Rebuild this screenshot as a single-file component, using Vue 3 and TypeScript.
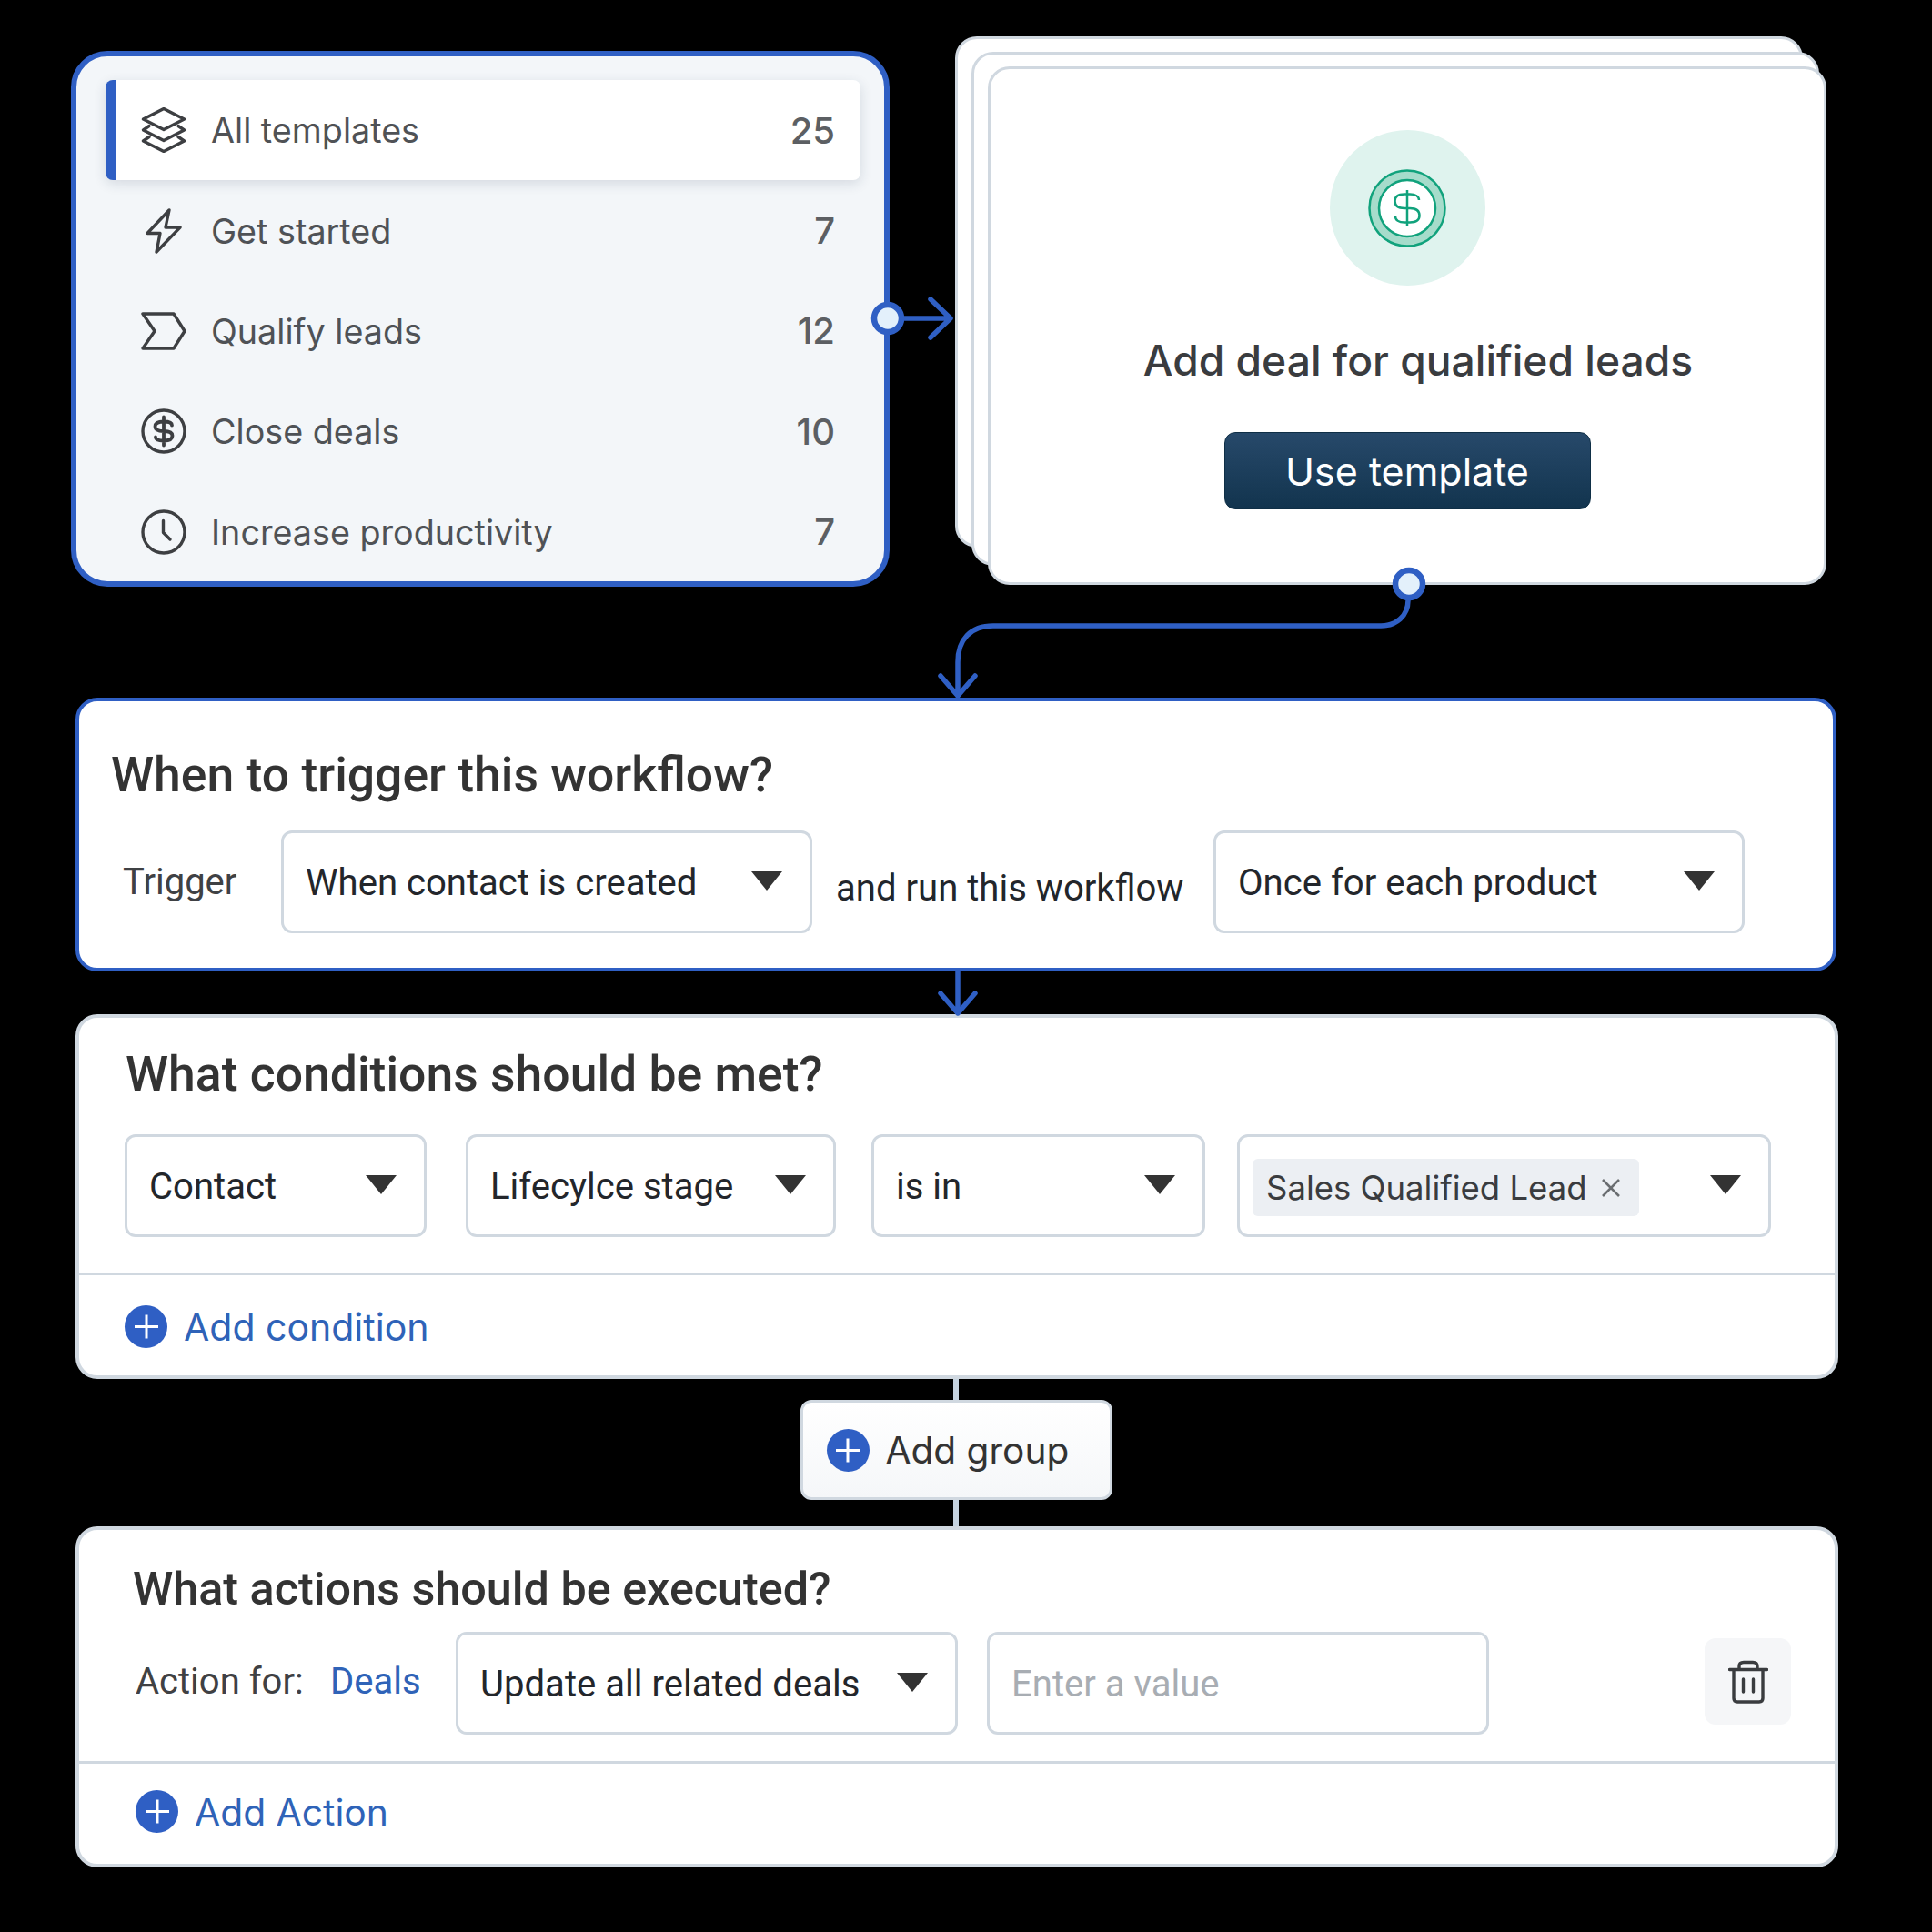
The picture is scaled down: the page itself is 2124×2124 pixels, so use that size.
<template>
  <div class="canvas">
    <div class="top-row">
      <div class="panel">
        <div
          v-for="(item, i) in categories"
          :key="item.label"
          class="cat-row"
          :class="{ active: i === 0 }"
        >
          <svg class="cat-icon" viewBox="0 0 50 50" fill="none" stroke="#3d3f42" stroke-width="3.4" stroke-linejoin="round" stroke-linecap="round">
            <template v-if="item.icon === 'layers'">
              <path d="M25 1.5 47.5 13 25 24.5 2.5 13Z" />
              <path d="M9 20.5 2.5 25 25 36.5 47.5 25 41 20.5" />
              <path d="M9 32.5 2.5 37 25 48.5 47.5 37 41 32.5" />
            </template>
            <path v-else-if="item.icon === 'bolt'" d="M31 2 7 27.5H21L17 48 43 21H27Z" />
            <path v-else-if="item.icon === 'tag'" d="M2 6H36L48 25 36 44H2L15 25Z" />
            <template v-else-if="item.icon === 'dollar'">
              <circle cx="25" cy="25" r="23" />
              <path d="M34 18.5C34 15.5 31 14.5 25 14.5 18.5 14.5 15.5 16.5 15.5 20 15.5 23.5 19 25 25 25 31 25 34.5 26.5 34.5 30 34.5 33.5 31.5 35.5 25 35.5 19 35.5 16 34.5 16 31.5M25 9.5V40.5" stroke-width="3.8" />
            </template>
            <template v-else>
              <circle cx="25" cy="25" r="23" />
              <path d="M24.5 12.5V25.5L32 33" />
            </template>
          </svg>
          <span class="cat-label">{{ item.label }}</span>
          <span class="cat-count">{{ item.count }}</span>
        </div>
      </div>

      <div class="stack">
        <div class="back back-1"></div>
        <div class="back back-2"></div>
        <div class="template-card">
          <div class="coin">
            <svg width="86" height="86" viewBox="0 0 86 86" fill="none">
              <circle cx="43" cy="43" r="36" fill="#fff" stroke="#a6dccb" stroke-width="12" />
              <circle cx="43" cy="43" r="41.5" stroke="#11a27c" stroke-width="2.5" />
              <circle cx="43" cy="43" r="31" stroke="#11a27c" stroke-width="2.5" />
              <path d="M56 34C56 30 52 27.5 46 27.5H40C33 27.5 29.5 30.5 29.5 35 29.5 40 33 43 40 43H46C53 43 56.5 46 56.5 51 56.5 55.5 53 58.5 46 58.5H40C34 58.5 30 56 30 52M43 23V63" stroke="#11a27c" stroke-width="2.5" />
            </svg>
          </div>
          <div class="template-title">Add deal for qualified leads</div>
          <button class="use-btn">Use template</button>
        </div>
      </div>
    </div>

    <section class="box trigger-box">
      <h2 class="trigger-title">When to trigger this workflow?</h2>
      <div class="trigger-row">
        <span class="lbl">Trigger</span>
        <div class="select w584"><span>When contact is created</span><i class="caret"></i></div>
        <span class="and-run">and run this workflow</span>
        <div class="select w584"><span>Once for each product</span><i class="caret"></i></div>
      </div>
    </section>

    <section class="box cond-box">
      <h2 class="cond-title">What conditions should be met?</h2>
      <div class="cond-row">
        <div class="select w332"><span>Contact</span><i class="caret"></i></div>
        <div class="select w407"><span>Lifecylce stage</span><i class="caret"></i></div>
        <div class="select w367"><span>is in</span><i class="caret"></i></div>
        <div class="select w587 tags">
          <span class="chip">Sales Qualified Lead
            <svg width="22" height="22" viewBox="0 0 22 22" stroke="#6a6d70" stroke-width="2.6"><path d="M2 2 20 20M20 2 2 20" /></svg>
          </span>
          <i class="caret"></i>
        </div>
      </div>
      <div class="add-line">
        <span class="plus"></span>
        <span>Add condition</span>
      </div>
    </section>

    <div class="group-wrap">
      <div class="link l1"></div>
      <button class="add-group"><span class="plus"></span>Add group</button>
      <div class="link l2"></div>
    </div>

    <section class="box action-box">
      <h2 class="action-title">What actions should be executed?</h2>
      <div class="action-row">
        <span class="action-for">Action for:</span>
        <span class="deals">Deals</span>
        <div class="select w552"><span>Update all related deals</span><i class="caret"></i></div>
        <div class="select w552 value"><span>Enter a value</span></div>
        <div class="trash">
          <svg width="44" height="48" viewBox="0 0 44 48" fill="none" stroke="#3a3c3f" stroke-width="3.4" stroke-linecap="round" stroke-linejoin="round">
            <path d="M1.5 10.5H42.5" />
            <path d="M6 11V42C6 44.5 7.5 46 10 46H34C36.5 46 38 44.5 38 42V11" />
            <path d="M12 10V7C12 4 14 2.5 17 2.5H27C30 2.5 32 4 32 7V10" />
            <path d="M16.5 21V35M27.5 21V35" />
          </svg>
        </div>
      </div>
      <div class="add-line action-add">
        <span class="plus"></span>
        <span>Add Action</span>
      </div>
    </section>

    <!-- connectors drawn over the cards -->
    <svg class="wires" width="2124" height="2124" viewBox="0 0 2124 2124" fill="none" stroke="#2f5fc4" stroke-width="5.5" stroke-linecap="round" stroke-linejoin="round">
      <path d="M990 350H1044M1023 329 1045 350 1023 371" />
      <path d="M1548 655V660C1548 677 1535 688 1518 688H1092C1067 688 1053 703 1053 728V765M1034 743 1053 765 1072 743" />
      <path d="M1053 1068V1114M1034 1092 1053 1114 1072 1092" />
      <circle cx="976" cy="350" r="15" fill="#e3f0fb" stroke-width="6.5" />
      <circle cx="1549" cy="642" r="15" fill="#e3f0fb" stroke-width="6.5" />
    </svg>
  </div>
</template>

<script setup lang="ts">
interface Category {
  label: string
  count: number
  icon: 'layers' | 'bolt' | 'tag' | 'dollar' | 'clock'
}

const categories: Category[] = [
  { label: 'All templates', count: 25, icon: 'layers' },
  { label: 'Get started', count: 7, icon: 'bolt' },
  { label: 'Qualify leads', count: 12, icon: 'tag' },
  { label: 'Close deals', count: 10, icon: 'dollar' },
  { label: 'Increase productivity', count: 7, icon: 'clock' },
]
</script>

<style>
html,
body {
  margin: 0;
  background: #000;
}
</style>

<style scoped>
.canvas {
  position: relative;
  width: 2124px;
  height: 2124px;
  box-sizing: border-box;
  padding: 40px 0 0 78px;
  background: #000;
  font-family: Inter, "Liberation Sans", sans-serif;
  color: #333;
}

.top-row {
  display: flex;
  align-items: flex-start;
  height: 605px;
}

.panel {
  width: 900px;
  height: 589px;
  margin-top: 16px;
  box-sizing: border-box;
  padding: 26px 26px 0 32px;
  background: #f3f6f9;
  border: 6px solid #2f5fc4;
  border-radius: 40px;
  overflow: hidden;
}

.cat-row {
  display: flex;
  align-items: center;
  height: 110.4px;
  box-sizing: border-box;
  padding: 0 28px 0 28px;
  border-left: 11px solid transparent;
  border-radius: 8px;
}

.cat-row.active {
  background: #fff;
  border-left-color: #2f5fc4;
  box-shadow: 0 4px 14px rgba(30, 50, 80, 0.14);
}

.cat-icon {
  width: 50px;
  height: 50px;
  flex: none;
}

.cat-label {
  margin-left: 27px;
  font-size: 37.7px;
  color: #4f5256;
}

.cat-count {
  margin-left: auto;
  font-size: 40px;
  font-weight: 500;
  color: #5c5f63;
}

.stack {
  position: relative;
  width: 958px;
  margin-left: 72px;
}

.back,
.template-card {
  box-sizing: border-box;
  background: #fff;
  border: 3px solid #d0d8e0;
  border-radius: 24px;
}

.back {
  position: absolute;
}

.back-1 {
  left: 0;
  top: 0;
  width: 932px;
  height: 562px;
}

.back-2 {
  left: 18px;
  top: 17px;
  width: 932px;
  height: 565px;
}

.template-card {
  position: relative;
  display: flex;
  flex-direction: column;
  align-items: center;
  width: 922px;
  height: 570px;
  margin: 33px 0 0 36px;
  padding-top: 67px;
}

.coin {
  display: flex;
  align-items: center;
  justify-content: center;
  width: 171px;
  height: 171px;
  background: #dff3ee;
  border-radius: 50%;
}

.template-title {
  margin: 54px 0 0 24px;
  font-size: 46.2px;
  line-height: 56px;
  font-weight: 500;
  color: #3a3c3f;
}

.use-btn {
  width: 403px;
  height: 85px;
  margin-top: 51px;
  border: 1px solid #0f2f46;
  border-radius: 12px;
  background: linear-gradient(#27496a, #12344e);
  color: #fff;
  font-family: inherit;
  font-size: 43px;
}

.box {
  box-sizing: border-box;
  background: #fff;
  border: 4px solid #d0d8e0;
  border-radius: 24px;
  font-family: Roboto, "Liberation Sans", sans-serif;
}

h2 {
  margin: 0;
  font-family: Roboto, sans-serif;
  font-size: 53.5px;
  font-weight: 500;
  color: #333;
}

.trigger-box {
  width: 1936px;
  height: 301px;
  margin: 122px 0 0 5px;
  padding: 50px 0 0 35px;
  border-color: #2f5fc4;
}

.trigger-title {
  line-height: 61px;
}

.trigger-row {
  display: flex;
  align-items: flex-start;
  margin-top: 31px;
  padding-left: 13px;
}

.lbl {
  width: 174px;
  font-size: 40px;
  line-height: 114px;
  color: #3f4144;
}

.select {
  display: flex;
  align-items: center;
  justify-content: space-between;
  box-sizing: border-box;
  height: 113px;
  padding: 2px 30px 0 24px;
  background: #fff;
  border: 3px solid #d0d8e0;
  border-radius: 12px;
  font-family: Roboto, sans-serif;
  font-size: 40.1px;
  color: #23262b;
}

.w584 {
  width: 584px;
}

.and-run {
  width: 441px;
  padding-left: 26px;
  box-sizing: border-box;
  white-space: nowrap;
  font-size: 40.1px;
  line-height: 128px;
  color: #23262b;
}

.caret {
  width: 0;
  height: 0;
  margin-bottom: 5px;
  border-left: 17px solid transparent;
  border-right: 17px solid transparent;
  border-top: 21px solid #333;
}

.cond-box {
  width: 1938px;
  height: 401px;
  margin: 47px 0 0 5px;
}

.cond-title {
  padding: 31px 0 0 51px;
  line-height: 62px;
}

.cond-row {
  display: flex;
  margin-top: 35px;
  padding-left: 50px;
}

.w332 {
  width: 332px;
}

.w407 {
  width: 407px;
  margin-left: 43px;
}

.w367 {
  width: 367px;
  margin-left: 39px;
}

.w587 {
  width: 587px;
  margin-left: 35px;
}

.tags {
  padding-left: 14px;
}

.chip {
  display: inline-flex;
  align-items: center;
  gap: 15px;
  box-sizing: border-box;
  height: 63px;
  padding: 2px 20px 0 15px;
  margin-top: 1px;
  background: #eceff3;
  border-radius: 6px;
  font-family: Inter, sans-serif;
  font-size: 36.5px;
  color: #3a3c3f;
}

.add-line {
  display: flex;
  align-items: center;
  gap: 18px;
  height: 113px;
  margin-top: 39px;
  padding-left: 50px;
  border-top: 3px solid #d0d8e0;
  font-family: Inter, sans-serif;
  font-size: 41px;
  color: #2f63b8;
}

.plus {
  position: relative;
  display: inline-block;
  flex: none;
  width: 47px;
  height: 47px;
  background: #2f5fc4;
  border-radius: 50%;
}

.plus::before,
.plus::after {
  content: "";
  position: absolute;
  left: 10.5px;
  top: 22px;
  width: 26px;
  height: 3px;
  background: #fff;
}

.plus::after {
  transform: rotate(90deg);
}

.group-wrap {
  display: flex;
  flex-direction: column;
  align-items: center;
  width: 1936px;
  margin-left: 5px;
}

.link {
  width: 5.5px;
  background: #c5d3e0;
}

.l1 {
  height: 23px;
}

.l2 {
  height: 29px;
}

.add-group {
  display: flex;
  align-items: center;
  gap: 18px;
  box-sizing: border-box;
  width: 343px;
  height: 110px;
  padding: 0 0 0 26px;
  background: linear-gradient(#fff, #f5f7f9);
  border: 3px solid #d0d8e0;
  border-radius: 12px;
  font-family: Inter, sans-serif;
  font-size: 40.6px;
  color: #333;
}

.action-box {
  width: 1938px;
  height: 375px;
  margin-left: 5px;
}

.action-title {
  padding: 36px 0 0 59px;
  font-size: 50.3px;
  line-height: 58px;
}

.action-row {
  display: flex;
  align-items: center;
  margin-top: 18px;
  padding-left: 62px;
}

.action-for {
  width: 214px;
  margin-bottom: 4px;
  font-size: 40px;
  color: #3f4144;
}

.deals {
  width: 138px;
  margin-bottom: 4px;
  font-size: 40px;
  color: #2f63b8;
}

.w552 {
  width: 552px;
}

.value {
  margin-left: 32px;
  color: #a8adb3;
}

.trash {
  display: flex;
  align-items: center;
  justify-content: center;
  width: 95px;
  height: 95px;
  margin: 0 0 4px 237px;
  background: #f5f6f8;
  border-radius: 12px;
}

.action-add {
  height: 110px;
  margin-top: 29px;
  padding: 0 0 2px 62px;
  box-sizing: border-box;
  font-size: 40.8px;
}

.wires {
  position: absolute;
  left: 0;
  top: 0;
  pointer-events: none;
}
</style>
